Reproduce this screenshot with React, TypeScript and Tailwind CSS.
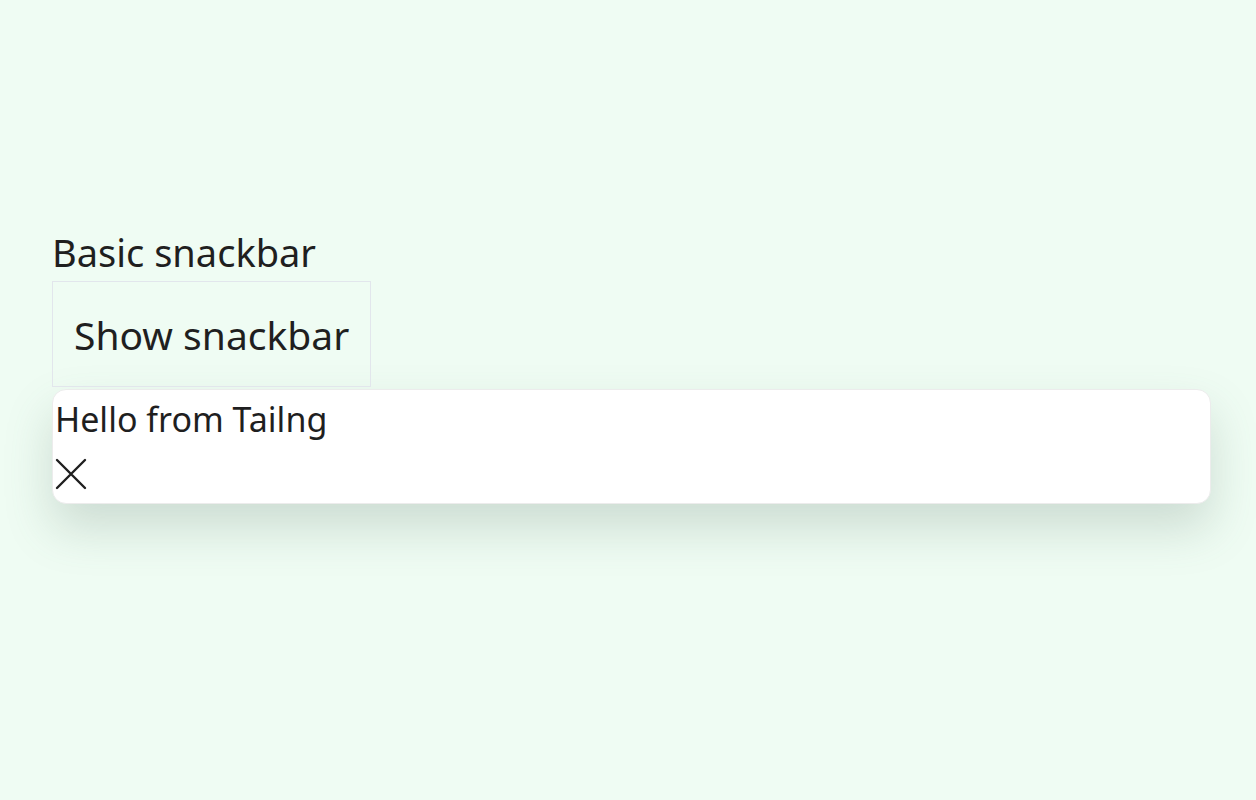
export default function App() {
  return (
    <div className="min-h-[800px] w-full bg-[#effcf3] px-[52px] pt-[226px] text-[#1f1f1f]" style={{ fontFamily: '"Noto Sans", "Open Sans", sans-serif' }}>
      <h2 className="text-[38px] leading-[52px] font-normal">Basic snackbar</h2>
      <button className="mt-[3px] h-[106px] border border-[#e2e6ec] bg-transparent px-[21px] text-[39px] leading-none">
        Show snackbar
      </button>
      <div className="mt-[2px] w-[1159px] h-[115px] rounded-[14px] border border-[#ececec] bg-white pl-[2px] pt-[6px] shadow-[0_24px_48px_rgba(80,110,95,0.22)]">
        <p className="text-[34px] leading-[46px]">Hello from Tailng</p>
        <svg className="mt-[16px] h-[32px] w-[32px]" viewBox="0 0 32 32" fill="none" stroke="#1f1f1f" strokeWidth={2.4} strokeLinecap="round">
          <path d="M2 2L30 30M30 2L2 30" />
        </svg>
      </div>
    </div>
  );
}
